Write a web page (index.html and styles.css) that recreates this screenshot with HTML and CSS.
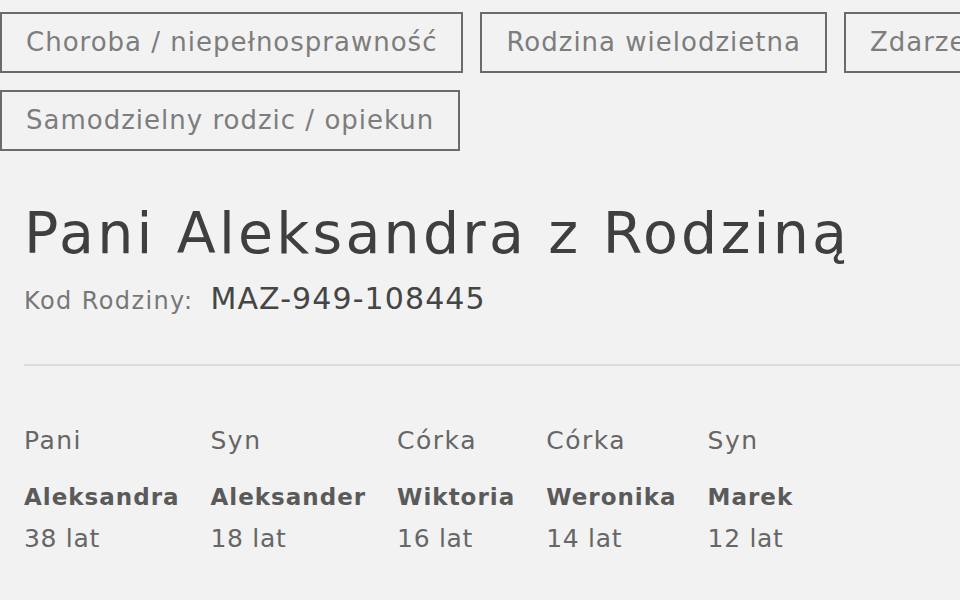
FILE: index.html
```html
<!DOCTYPE html>
<html lang="pl">
	<head>
		<meta charset="utf-8">
		<title>Pani Aleksandra z Rodziną</title>
		<link rel="stylesheet" href="styles.css">
	</head>
	<body>
		<div class="family-wrapper">

			<ul class="family-tags">
				<li class="family-tag">Choroba / niepełnosprawność</li>
				<li class="family-tag">Rodzina wielodzietna</li>
				<li class="family-tag">Zdarzenie losowe</li>
				<li class="family-tag">Samodzielny rodzic / opiekun</li>
			</ul>

			<div class="family-info">
				<h1 class="family-title">Pani Aleksandra z Rodziną</h1>
				<p class="family-code">
					<span class="family-code-label">Kod Rodziny:</span>
					<span class="family-code-value">MAZ-949-108445</span>
				</p>

				<hr class="family-divider">

				<div class="family-members">
					<div class="member">
						<p class="member-role">Pani</p>
						<p class="member-name">Aleksandra</p>
						<p class="member-age">38 lat</p>
					</div>
					<div class="member">
						<p class="member-role">Syn</p>
						<p class="member-name">Aleksander</p>
						<p class="member-age">18 lat</p>
					</div>
					<div class="member">
						<p class="member-role">Córka</p>
						<p class="member-name">Wiktoria</p>
						<p class="member-age">16 lat</p>
					</div>
					<div class="member">
						<p class="member-role">Córka</p>
						<p class="member-name">Weronika</p>
						<p class="member-age">14 lat</p>
					</div>
					<div class="member">
						<p class="member-role">Syn</p>
						<p class="member-name">Marek</p>
						<p class="member-age">12 lat</p>
					</div>
				</div>
			</div>

		</div>
	</body>
</html>
```

FILE: styles.css
```css
html, body{
	margin: 0;
	padding: 0;
	overflow: hidden;
}
body{
	background: #f2f2f2;
	font-family: "DejaVu Sans", Inter, sans-serif;
	color: #666666;
}
p{
	margin: 0;
}

.family-wrapper{
	width: 1240px;
	padding-top: 12px;
}

.family-tags{
	display: flex;
	flex-wrap: wrap;
	gap: 17px;
	margin: 0;
	padding: 0;
	list-style: none;
}
.family-tag{
	height: 57px;
	line-height: 57px;
	padding: 0 24px;
	border: 2px solid #6b6b6b;
	font-size: 26px;
	letter-spacing: 1px;
	color: #7d7d7d;
}

.family-info{
	padding: 0 0 0 24px;
	width: 936px;
}
.family-title{
	margin: 42px 0 0;
	font-size: 57px;
	line-height: 80px;
	font-weight: 400;
	letter-spacing: 3.2px;
	color: #3f3f3f;
}
.family-code{
	display: flex;
	align-items: baseline;
	gap: 17px;
	margin-top: 8px;
}
.family-code-label{
	font-size: 24px;
	letter-spacing: 1.4px;
	color: #777777;
}
.family-code-value{
	font-size: 30px;
	letter-spacing: 1.1px;
	color: #454545;
}

.family-divider{
	margin: 48px 0 0;
	border: 0;
	border-top: 2px solid #dcdcdc;
}

.family-members{
	display: flex;
	gap: 31px;
	padding-top: 60px;
}
.member-role{
	font-size: 25px;
	line-height: 30px;
	letter-spacing: 1.5px;
	color: #666666;
}
.member-name{
	margin-top: 26px;
	font-size: 23px;
	line-height: 30px;
	font-weight: 700;
	letter-spacing: 1px;
	color: #5a5a5a;
}
.member-age{
	margin-top: 12px;
	font-size: 25px;
	line-height: 30px;
	letter-spacing: 0.7px;
	color: #666666;
}
```
